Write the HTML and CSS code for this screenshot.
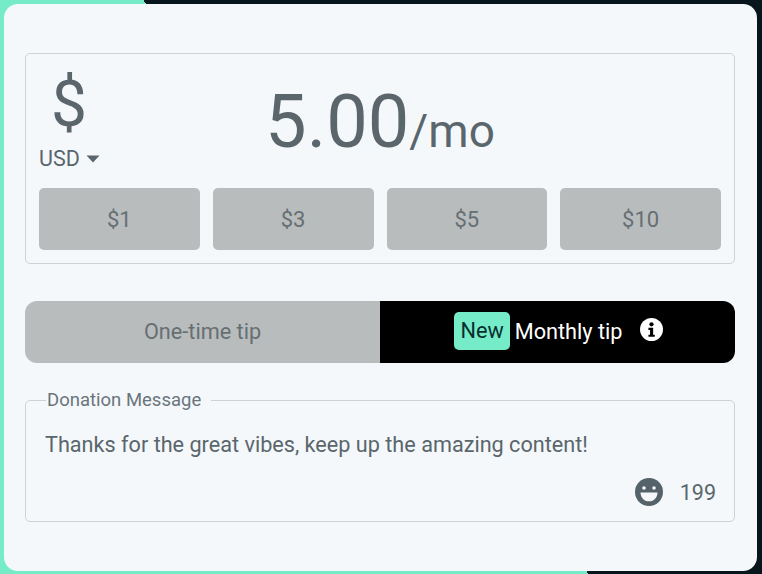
FILE: index.html
```
<!DOCTYPE html>
<html lang="en">
<head>
<meta charset="utf-8">
<title>Donation</title>
<link rel="stylesheet" href="styles.css">
</head>
<body>
<main class="card">
  <section class="amount-box">
    <div class="amount-row">
      <div class="currency">
        <span class="currency-symbol">$</span>
        <span class="currency-code">USD <svg class="caret" viewBox="0 0 14 8" aria-hidden="true"><path d="M0.5 0.5h13L7 7.5z"/></svg></span>
      </div>
      <div class="amount"><span class="amount-value">5.00</span><span class="amount-unit">/mo</span></div>
    </div>
    <div class="presets">
      <button class="preset">$1</button>
      <button class="preset">$3</button>
      <button class="preset">$5</button>
      <button class="preset">$10</button>
    </div>
  </section>
  <div class="toggle">
    <div class="toggle-side toggle-off">One-time tip</div>
    <div class="toggle-side toggle-on">
      <span class="badge">New</span>
      <span class="toggle-label">Monthly tip</span>
      <svg class="info" viewBox="0 0 24 24" aria-hidden="true"><circle cx="12" cy="12" r="12" fill="#fff"/><circle cx="12" cy="6.6" r="2.2" fill="#000"/><path d="M8.800 10.200h4.900v7.200h1.700v2.200H8.800v-2.200h1.700v-5H8.800z" fill="#000"/></svg>
    </div>
  </div>
  <fieldset class="message">
    <legend class="message-legend">Donation Message</legend>
    <p class="message-text">Thanks for the great vibes, keep up the amazing content!</p>
    <div class="message-foot">
      <svg class="smile" viewBox="0 0 28 28" aria-hidden="true"><circle cx="14" cy="14" r="14" fill="#56626a"/><circle cx="9" cy="10" r="1.800" fill="#f4f8fb"/><circle cx="19" cy="10" r="1.800" fill="#f4f8fb"/><path d="M5.500 14.500h17c0 5.200-3.600 8.800-8.500 8.800s-8.500-3.600-8.500-8.800z" fill="#f4f8fb"/></svg>
      <span class="count">199</span>
    </div>
  </fieldset>
</main>
</body>
</html>
```
FILE: styles.css
```
* { box-sizing: border-box; }
html, body { margin: 0; height: 100%; }
body {
  width: 762px;
  height: 574px;
  overflow: hidden;
  padding: 4px 5px 3px 4px;
  font-family: Roboto, "Liberation Sans", sans-serif;
  color: #5a666c;
  background: linear-gradient(52.2deg, #76ebc8 465px, #06161c 465px);
}
.card {
  height: 567px;
  background: #f4f8fb;
  border-radius: 14px;
  padding: 49px 22px 0 21px;
}
.amount-box {
  height: 211px;
  border: 1px solid #cdd2d6;
  border-radius: 5px;
  padding: 0 13px;
}
.amount-row {
  height: 134px;
  display: flex;
}
.currency {
  width: 62px;
  display: flex;
  flex-direction: column;
  align-items: center;
}
.currency-symbol {
  font-size: 64px;
  font-weight: 400;
  line-height: 78px;
  height: 87px;
  padding-top: 12px;
  margin-left: -2px;
}
.currency-code {
  font-size: 21.5px;
  line-height: 24px;
  display: flex;
  align-items: center;
  gap: 6px;
  margin-top: 6px;
  margin-left: -1px;
  white-space: nowrap;
}
.caret { width: 14px; height: 8px; fill: #5a666c; }
.amount {
  flex: 1;
  display: flex;
  justify-content: center;
  align-items: baseline;
  padding: 20px 0 0 0;
  margin-left: -62px;
  line-height: 96px;
}
.amount-value { font-size: 74px; }
.amount-unit { font-size: 46px; }
.presets {
  display: grid;
  grid-template-columns: repeat(4, 1fr);
  gap: 13px;
}
.preset {
  height: 62px;
  border: 0;
  border-radius: 5px;
  background: #b8bcbc;
  color: #666f74;
  font: 22px Roboto, "Liberation Sans", sans-serif;
  padding: 0;
}
.toggle {
  display: flex;
  height: 62px;
  margin-top: 37px;
  border-radius: 12px;
  overflow: hidden;
  font-size: 21.7px;
}
.toggle-side {
  width: 50%;
  display: flex;
  align-items: center;
  justify-content: center;
  padding-bottom: 2px;
}
.toggle-off { background: #b8bcbc; color: #666f74; }
.toggle-on { background: #000; color: #fff; padding-left: 2px; }
.badge {
  background: #76ebc8;
  color: #06302e;
  border-radius: 5px;
  padding: 0 6px;
  height: 38px;
  line-height: 38px;
}
.toggle-label { margin-left: 5px; }
.info { width: 23px; height: 23px; margin-left: 17px; margin-top: -3px; }
.message {
  margin: 27px 0 0;
  padding: 0 18px;
  height: 132px;
  border: 1px solid #cdd2d6;
  border-radius: 5px;
  min-width: 0;
}
.message-legend {
  margin-left: 2px;
  padding: 0 10px 0 1px;
  font-size: 18.5px;
  line-height: 21px;
  color: #6a757b;
}
.message-text {
  margin: 20px 0 0 1px;
  font-size: 21.65px;
  line-height: 28px;
}
.message-foot {
  display: flex;
  justify-content: flex-end;
  align-items: center;
  margin-top: 19px;
}
.smile { width: 28px; height: 28px; margin-left: -1px; }
.count { font-size: 21.5px; margin-left: 17px; }
```
